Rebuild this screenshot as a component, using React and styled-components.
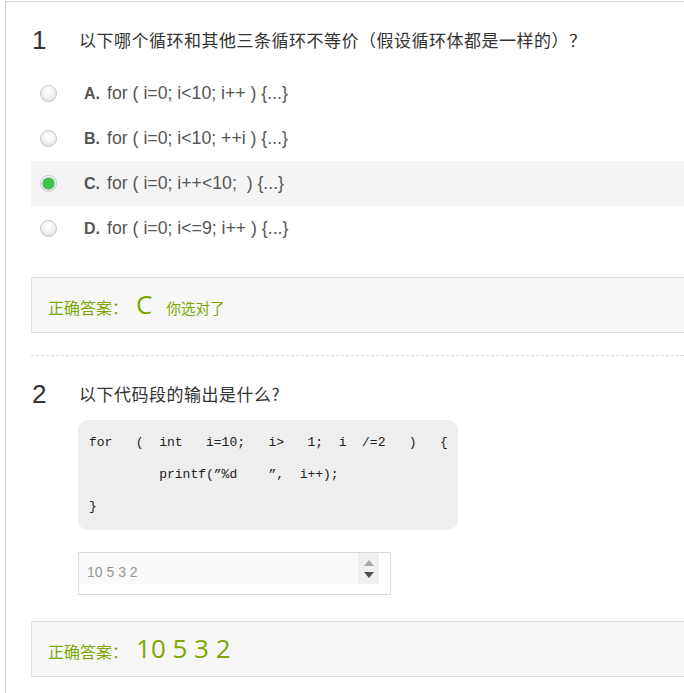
import React from 'react';
import styled, { createGlobalStyle } from 'styled-components';

const GlobalStyle = createGlobalStyle`
  html, body {
    margin: 0;
    padding: 0;
    background: #fff;
    overflow: hidden;
  }
  body {
    font-family: "Liberation Sans", Arial, "Noto Sans CJK SC", sans-serif;
  }
`;

const Page = styled.div`
  margin: 1px 0 0 5px;
  border-top: 1px solid #d3d3d3;
  border-left: 1px solid #d3d3d3;
  padding: 23px 0 40px 25px;
`;

const Header = styled.div`
  display: flex;
  align-items: center;
  height: 30px;
  margin-top: ${props => props.$top || 0}px;
`;

const Num = styled.div`
  width: 48px;
  font-family: "Liberation Sans", Arial, sans-serif;
  font-size: 26px;
  line-height: 30px;
  color: #333;
  padding-left: 1px;
  box-sizing: border-box;
`;

const Title = styled.div`
  font-family: "Noto Sans CJK SC", sans-serif;
  font-size: 17px;
  line-height: 30px;
  color: #333;
  letter-spacing: 0.5px;
`;

const Options = styled.div`
  margin-top: 16px;
  display: flex;
  flex-direction: column;
`;

const Option = styled.div`
  display: flex;
  align-items: center;
  height: 45px;
  padding-left: 9px;
  background: ${props => (props.$active ? '#f5f5f5' : 'transparent')};
`;

const Radio = styled.span`
  position: relative;
  width: 17px;
  height: 17px;
  border-radius: 50%;
  box-sizing: border-box;
  border: 1px solid #c6c6c6;
  background: radial-gradient(circle at 50% 35%, #ffffff 0%, #f3f3f3 45%, #dedede 100%);
  box-shadow: inset 0 -1px 1px rgba(0, 0, 0, 0.04);
  &::after {
    content: '';
    display: ${props => (props.$checked ? 'block' : 'none')};
    position: absolute;
    left: 2px;
    top: 2px;
    width: 11px;
    height: 11px;
    border-radius: 50%;
    background: #3cc44c;
    box-shadow: 0 0 0 0.5px #33a843;
  }
`;

const Label = styled.span`
  margin-left: 27px;
  margin-right: 7px;
  font-size: 16px;
  font-weight: 700;
  color: #555;
`;

const OptText = styled.span`
  font-size: 17.7px;
  color: #555;
  white-space: pre;
`;

const AnswerBox = styled.div`
  display: flex;
  align-items: baseline;
  height: 56px;
  box-sizing: border-box;
  margin-top: ${props => props.$top}px;
  padding: 11px 16px 0;
  background: #f7f7f7;
  border: 1px solid #dedede;
  border-right: none;
  font-family: "Noto Sans CJK SC", sans-serif;
  color: #7ea700;
  line-height: 30px;
`;

const AnswerLabel = styled.span`
  font-size: 16px;
`;

const AnswerValue = styled.span`
  font-family: "Open Sans", "Noto Sans", sans-serif;
  font-size: 26px;
  margin-left: 8px;
`;

const Hint = styled.span`
  font-size: 14.5px;
  margin-left: 14px;
`;

const Divider = styled.div`
  margin-top: 22px;
  border-top: 1px dashed #dcdcdc;
`;

const Code = styled.pre`
  margin: 11px 0 0 47px;
  width: 380px;
  box-sizing: border-box;
  padding: 7px 11px;
  background: #eeeeee;
  border-radius: 10px;
  font-family: "Liberation Mono", "Courier New", monospace;
  font-size: 13px;
  line-height: 32px;
  color: #222;
`;

const InputBox = styled.div`
  margin: 22px 0 0 47px;
  width: 313px;
  height: 43px;
  box-sizing: border-box;
  border: 1px solid #dadada;
  background: #fff;
`;

const InputInner = styled.div`
  display: flex;
  width: 300px;
  height: 31px;
  background: #fafafa;
`;

const InputText = styled.div`
  flex: 1;
  display: flex;
  align-items: flex-end;
  padding: 0 0 4px 8px;
  font-size: 14px;
  color: #999;
`;

const Scroll = styled.div`
  width: 21px;
  background: #efefef;
  display: flex;
  flex-direction: column;
  align-items: center;
  justify-content: center;
  gap: 6px;
`;

function Arrow({ up, color }) {
  return (
    <svg width="10" height="6" viewBox="0 0 10 6">
      <path d={up ? 'M0 6 L5 0 L10 6 Z' : 'M0 0 L10 0 L5 6 Z'} fill={color} />
    </svg>
  );
}

const options = [
  { key: 'A', text: 'for ( i=0; i<10; i++ ) {...}' },
  { key: 'B', text: 'for ( i=0; i<10; ++i ) {...}' },
  { key: 'C', text: 'for ( i=0; i++<10;  ) {...}' },
  { key: 'D', text: 'for ( i=0; i<=9; i++ ) {...}' },
];

const code = [
  'for   (  int   i=10;   i>   1;  i  /=2   )   {',
  '         printf(\u201d%d    \u201d,  i++);',
  '}',
].join('\n');

export default function App() {
  return (
    <>
      <GlobalStyle />
      <Page>
        <Header>
          <Num>1</Num>
          <Title>以下哪个循环和其他三条循环不等价（假设循环体都是一样的）？</Title>
        </Header>
        <Options>
          {options.map(o => (
            <Option key={o.key} $active={o.key === 'C'}>
              <Radio $checked={o.key === 'C'} />
              <Label>{o.key}.</Label>
              <OptText>{o.text}</OptText>
            </Option>
          ))}
        </Options>
        <AnswerBox $top={26}>
          <AnswerLabel>正确答案：</AnswerLabel>
          <AnswerValue>C</AnswerValue>
          <Hint>你选对了</Hint>
        </AnswerBox>
        <Divider />

        <Header $top={23}>
          <Num>2</Num>
          <Title>以下代码段的输出是什么?</Title>
        </Header>
        <Code>{code}</Code>
        <InputBox>
          <InputInner>
            <InputText>10 5 3 2</InputText>
            <Scroll>
              <Arrow up color="#a8a8a8" />
              <Arrow color="#505050" />
            </Scroll>
          </InputInner>
        </InputBox>
        <AnswerBox $top={26}>
          <AnswerLabel>正确答案：</AnswerLabel>
          <AnswerValue>10 5 3 2</AnswerValue>
        </AnswerBox>
      </Page>
    </>
  );
}
